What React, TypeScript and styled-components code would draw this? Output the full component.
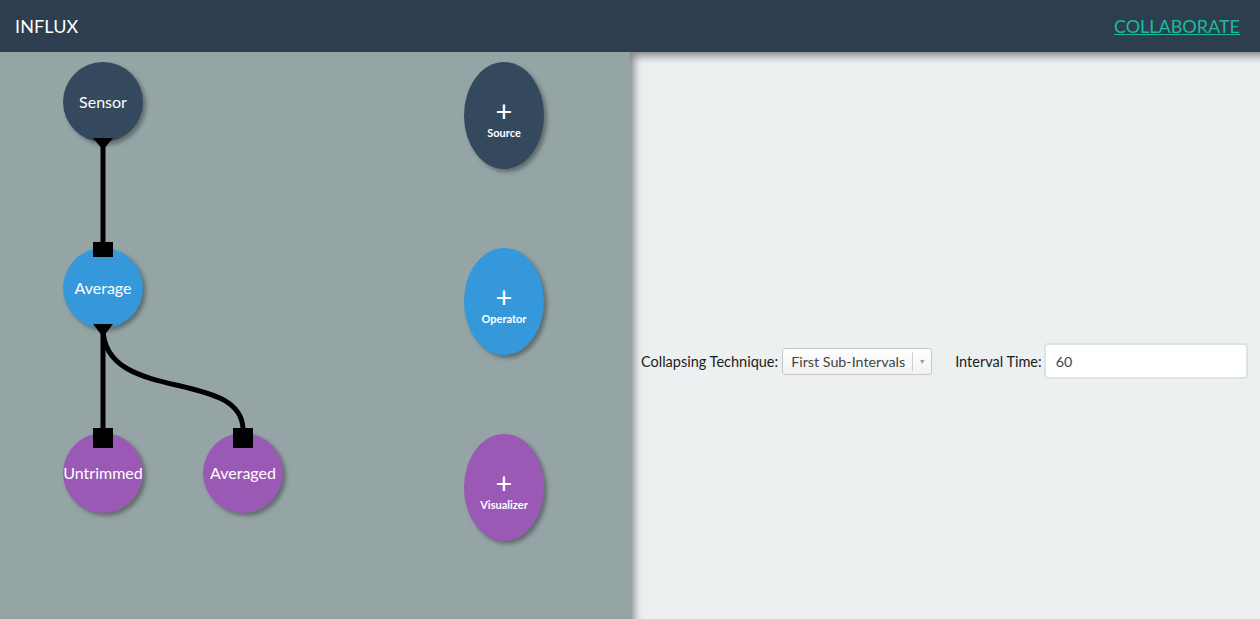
import React from "react";
import styled, { createGlobalStyle } from "styled-components";

const GlobalStyle = createGlobalStyle`
  html, body { margin: 0; padding: 0; }
  body { font-family: Lato, "Open Sans", sans-serif; overflow: hidden; }
  * { box-sizing: border-box; }
`;

const Page = styled.div`
  width: 1260px;
  height: 619px;
  display: flex;
  flex-direction: column;
`;

const Header = styled.header`
  height: 52px;
  background: #2c3e50;
  display: flex;
  align-items: center;
  justify-content: space-between;
  padding: 0 20px 0 15px;
  position: relative;
  z-index: 2;
`;

const Brand = styled.div`
  color: #ffffff;
  font-size: 18px;
  letter-spacing: 0.1px;
`;

const NavLink = styled.a`
  color: #1abc9c;
  font-size: 18px;
  text-decoration: underline;
  cursor: pointer;
`;

const Body = styled.div`
  flex: 1;
  display: flex;
  min-height: 0;
`;

const Workspace = styled.div`
  width: 630px;
  background: #95a5a6;
  display: flex;
`;

const Canvas = styled.div`
  flex: 1;
  position: relative;
`;

const Wires = styled.svg`
  position: absolute;
  left: 0;
  top: 0;
  width: 100%;
  height: 100%;
  z-index: 2;
  pointer-events: none;
`;

const NodeCircle = styled.div<{ $color: string; $x: number; $y: number }>`
  position: absolute;
  left: ${(p) => p.$x - 40}px;
  top: ${(p) => p.$y - 40}px;
  width: 80px;
  height: 80px;
  border-radius: 50%;
  background: ${(p) => p.$color};
  box-shadow: 3px 3px 4px rgba(0, 0, 0, 0.35);
  color: #fff;
  display: flex;
  align-items: center;
  justify-content: center;
  font-size: 16px;
  white-space: nowrap;
  padding-bottom: 2px;
  z-index: 1;
`;

const Palette = styled.div`
  width: 166px;
  padding: 10px 0 0 0;
  display: flex;
  flex-direction: column;
  align-items: flex-start;
  gap: 79px;
`;

const AddButton = styled.div<{ $color: string }>`
  width: 80px;
  height: 107px;
  border-radius: 50%;
  background: ${(p) => p.$color};
  box-shadow: 3px 3px 4px rgba(0, 0, 0, 0.35);
  color: #fff;
  display: flex;
  flex-direction: column;
  align-items: center;
  justify-content: center;
  cursor: pointer;
  padding-top: 7px;
`;

const Plus = styled.span`
  font-size: 29px;
  line-height: 24px;
`;

const AddLabel = styled.span`
  font-size: 11px;
  font-weight: 700;
  margin-top: 3px;
`;

const Inspector = styled.div`
  flex: 1;
  background: #ecf0f1;
  box-shadow: inset 7px 7px 8px -3px rgba(0, 0, 0, 0.45);
  padding: 291px 12px 0 11px;
`;

const FormRow = styled.div`
  display: flex;
  align-items: center;
  height: 36px;
`;

const Label = styled.label<{ $gap?: number }>`
  font-size: 14.5px;
  color: #1c1c1c;
  margin-right: ${(p) => p.$gap ?? 4}px;
`;

const Select = styled.div`
  width: 150px;
  height: 27px;
  border: 1px solid #c8c8c8;
  border-radius: 3px;
  background: linear-gradient(#ffffff, #f2f2f2);
  display: flex;
  align-items: stretch;
  margin-right: 23px;
`;

const SelectText = styled.span`
  flex: 1;
  font-size: 14.3px;
  color: #444;
  display: flex;
  align-items: center;
  padding-left: 8px;
  white-space: nowrap;
`;

const SelectArrow = styled.span`
  width: 19px;
  border-left: 1px solid #d0d0d0;
  margin: 3px 0;
  color: #999;
  font-size: 7px;
  display: flex;
  align-items: center;
  justify-content: center;
`;

const Input = styled.div`
  flex: 1;
  height: 36px;
  background: #fff;
  border: 2px solid #dce3e6;
  border-radius: 4px;
  font-size: 14.3px;
  color: #34495e;
  display: flex;
  align-items: center;
  padding-left: 10px;
`;

const nodes = [
  { label: "Sensor", color: "#34495e", x: 103, y: 50 },
  { label: "Average", color: "#3498db", x: 103, y: 236 },
  { label: "Untrimmed", color: "#9b59b6", x: 103, y: 421 },
  { label: "Averaged", color: "#9b59b6", x: 243, y: 421 },
];

const palette = [
  { label: "Source", color: "#34495e" },
  { label: "Operator", color: "#3498db" },
  { label: "Visualizer", color: "#9b59b6" },
];

export default function App() {
  return (
    <Page>
      <GlobalStyle />
      <Header>
        <Brand>INFLUX</Brand>
        <NavLink>COLLABORATE</NavLink>
      </Header>
      <Body>
        <Workspace>
          <Canvas>
            {nodes.map((n) => (
              <NodeCircle key={n.label} $color={n.color} $x={n.x} $y={n.y}>
                {n.label}
              </NodeCircle>
            ))}
            <Wires viewBox="0 0 464 567">
              <g stroke="#000" strokeWidth="5" fill="none">
                <path d="M103 90 L103 192" />
                <path d="M103 276 L103 378" />
                <path d="M103 276 C103 352, 243 316, 243 378" />
              </g>
              <g fill="#000">
                <polygon points="93,86 113,86 103,98" />
                <rect x="93" y="190" width="20" height="15" />
                <polygon points="93,272 113,272 103,285" />
                <rect x="93" y="376" width="20" height="20" />
                <rect x="233" y="376" width="20" height="20" />
              </g>
            </Wires>
          </Canvas>
          <Palette>
            {palette.map((p) => (
              <AddButton key={p.label} $color={p.color}>
                <Plus>+</Plus>
                <AddLabel>{p.label}</AddLabel>
              </AddButton>
            ))}
          </Palette>
        </Workspace>
        <Inspector>
          <FormRow>
            <Label>Collapsing Technique:</Label>
            <Select>
              <SelectText>First Sub-Intervals</SelectText>
              <SelectArrow>▼</SelectArrow>
            </Select>
            <Label $gap={2}>Interval Time:</Label>
            <Input>60</Input>
          </FormRow>
        </Inspector>
      </Body>
    </Page>
  );
}
